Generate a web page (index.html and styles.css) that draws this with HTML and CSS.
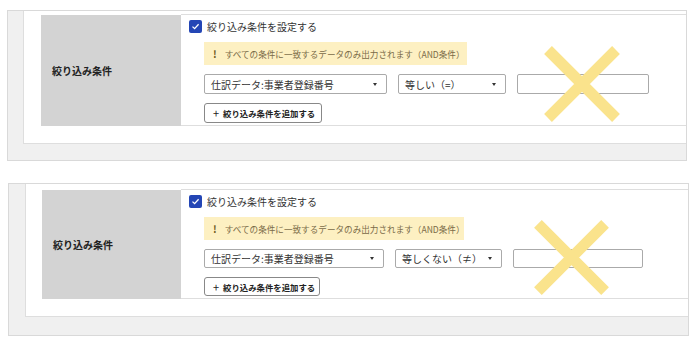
FILE: index.html
```html
<!DOCTYPE html>
<html lang="ja">
<head>
  <meta charset="UTF-8" />
  <meta name="viewport" content="width=device-width, initial-scale=1.0"/>
  <title>絞り込み条件</title>
  <link rel="stylesheet" href="styles.css">
</head>
<body>

  <div class="frame first">
    <div class="sheet">
      <div class="table">
        <div class="label">絞り込み条件</div>
        <div class="cell">
          <label class="check-row">
            <span class="checkbox">
              <svg width="9" height="9" viewBox="0 0 9 9"><path d="M1.5 4.6 L3.6 6.6 L7.6 2.2" fill="none" stroke="#fff" stroke-width="1.3"/></svg>
            </span>
            絞り込み条件を設定する
          </label>
          <div class="notice"><b>!</b>すべての条件に一致するデータのみ出力されます（AND条件）</div>
          <div class="filter">
            <div class="select field">仕訳データ:事業者登録番号<span class="caret"></span></div>
            <div class="select op">等しい（=）<span class="caret"></span></div>
            <div class="input"></div>
          </div>
          <button class="add"><span class="plus">+</span>絞り込み条件を追加する</button>
          <svg class="cross" viewBox="0 0 78 78"><path d="M5 5 L73 73 M73 5 L5 73" stroke="#fae38c" stroke-width="11"/></svg>
        </div>
      </div>
    </div>
  </div>

  <div class="frame second">
    <div class="sheet">
      <div class="table">
        <div class="label">絞り込み条件</div>
        <div class="cell">
          <label class="check-row">
            <span class="checkbox">
              <svg width="9" height="9" viewBox="0 0 9 9"><path d="M1.5 4.6 L3.6 6.6 L7.6 2.2" fill="none" stroke="#fff" stroke-width="1.3"/></svg>
            </span>
            絞り込み条件を設定する
          </label>
          <div class="notice"><b>!</b>すべての条件に一致するデータのみ出力されます（AND条件）</div>
          <div class="filter">
            <div class="select field">仕訳データ:事業者登録番号<span class="caret"></span></div>
            <div class="select op">等しくない（≠）<span class="caret"></span></div>
            <div class="input"></div>
          </div>
          <button class="add"><span class="plus">+</span>絞り込み条件を追加する</button>
          <svg class="cross" viewBox="0 0 78 78"><path d="M5 5 L73 73 M73 5 L5 73" stroke="#fae38c" stroke-width="11"/></svg>
        </div>
      </div>
    </div>
  </div>

</body>
</html>
```

FILE: styles.css
```css
* {
  box-sizing: border-box;
}

body {
  margin: 0;
  padding-top: 10px;
  font-family: "Noto Sans CJK JP", "Noto Sans", sans-serif;
  font-size: 10px;
  color: #333;
  background: #fff;
}

.frame {
  background: #f0f0f0;
  border: 1px solid #d9d9d9;
}

.first {
  width: 680px;
  margin-left: 7px;
  padding: 0 0 16px 15px;
}

.second {
  width: 681px;
  margin: 22px 0 0 8px;
  padding: 0 0 18px 16px;
}

.sheet {
  background: #fff;
  border-left: 1px solid #dedede;
  border-bottom: 1px solid #dedede;
}

.first .sheet {
  padding: 3px 0 17px 17px;
}

.second .sheet {
  padding: 5px 0 17px 16px;
}

.table {
  display: grid;
  grid-template-columns: 140px 1fr;
}

.second .table {
  grid-template-columns: 139px 1fr;
}

.label {
  background: #d3d3d3;
  margin-top: 1px;
  padding-left: 11px;
  display: flex;
  align-items: center;
  font-weight: bold;
  color: #222;
}

.cell {
  position: relative;
  border-top: 1px solid #dedede;
  border-bottom: 1px solid #dedede;
  padding: 0 8px 2px 8px;
}

.check-row {
  height: 22px;
  display: flex;
  align-items: center;
  gap: 5px;
}

.checkbox {
  width: 13px;
  height: 13px;
  border-radius: 2px;
  background: #2446b5;
  display: flex;
  align-items: center;
  justify-content: center;
}

.notice {
  width: 263px;
  height: 23px;
  margin: 5px 0 0 15px;
  padding-left: 9px;
  background: #fdf0c2;
  color: #7a6b48;
  font-size: 8.6px;
  display: flex;
  align-items: center;
  white-space: nowrap;
}

.notice b {
  color: #6e5a1c;
  font-size: 10px;
  margin-right: 8px;
}

.second .notice {
  width: 260px;
}

.filter {
  display: flex;
  gap: 11px;
  margin: 9px 0 0 15px;
}

.select, .input {
  height: 20px;
  border: 1px solid #aaa;
  border-radius: 2px;
  background: #fff;
}

.select {
  display: flex;
  align-items: center;
  justify-content: space-between;
  padding: 0 9px 0 6px;
  white-space: nowrap;
  color: #333;
}

.caret {
  width: 0;
  height: 0;
  border-left: 2.5px solid transparent;
  border-right: 2.5px solid transparent;
  border-top: 3px solid #333;
}

.field { width: 183px; }
.op { width: 108px; }
.input { width: 132px; }

.second .select, .second .input { height: 19px; }
.second .field { width: 180px; }
.second .op { width: 107px; }
.second .input { width: 130px; }

.add {
  display: flex;
  align-items: center;
  width: 118px;
  height: 20px;
  margin: 9px 0 0 15px;
  padding: 0 0 0 8px;
  border: 1px solid #888;
  border-radius: 3px;
  background: #fff;
  font-family: inherit;
  font-size: 8.4px;
  font-weight: bold;
  color: #222;
  white-space: nowrap;
}

.plus {
  font-size: 11px;
  font-weight: normal;
  margin-right: 4px;
}

.second .add {
  width: 116px;
  height: 19px;
}

.cross {
  position: absolute;
  width: 78px;
  height: 78px;
  left: 362px;
  top: 30px;
}

.second .cross {
  width: 77px;
  height: 77px;
  left: 352px;
  top: 29px;
}
```
